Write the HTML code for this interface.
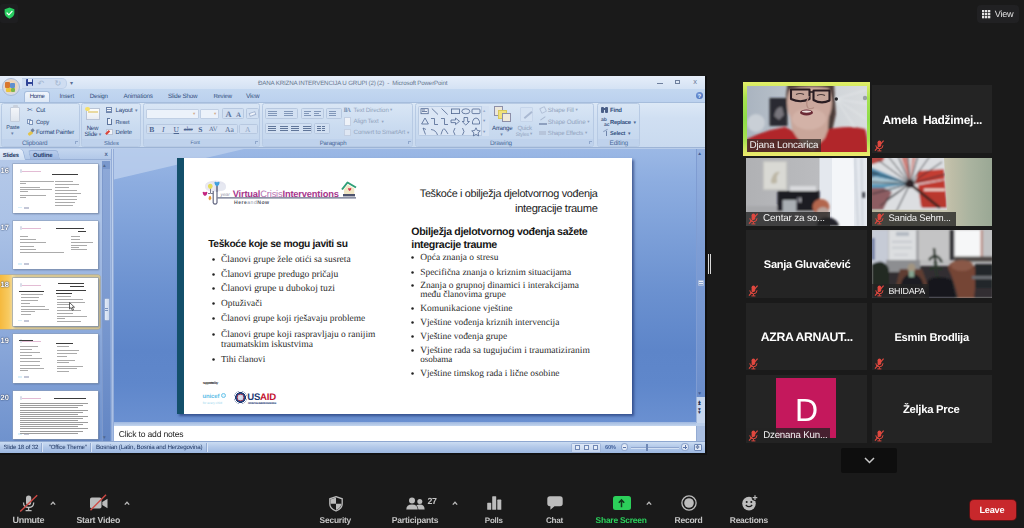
<!DOCTYPE html>
<html lang="bs">
<head>
<meta charset="utf-8">
<title>Zoom Meeting</title>
<style>
*{box-sizing:border-box;margin:0;padding:0}
html,body{width:1024px;height:528px;overflow:hidden;background:#1a1a1a}
body{position:relative;font-family:"Liberation Sans",sans-serif;color:#fff;text-rendering:geometricPrecision}
.a{position:absolute}
.t{position:absolute;white-space:pre;line-height:1}
svg{position:absolute;overflow:visible}
#ppt{position:absolute;left:0;top:76px;width:705px;height:377px;overflow:hidden;background:#bfd4ee}
#pin{position:absolute;left:-4px;top:-4px;width:713px;height:385px;padding:0;filter:blur(.45px)}
#pin>*{margin:4px 0 0 4px}
#edge{position:absolute;left:705px;top:76px;width:2px;height:377px;background:#101010}
#zm{position:absolute;left:0;top:0;width:1024px;height:528px;will-change:transform}
.tile{position:absolute;background:#242424;overflow:hidden}
</style>
</head>
<body>
<!-- ================= PowerPoint shared window ================= -->
<div id="ppt"><div id="pin">
<div class="a" style="left:0px;top:0px;width:705px;height:13px;background:linear-gradient(#e6eef9,#d4e2f4)"></div>
<div class="t" style="left:258px;top:5px;font-size:6.2px;color:#66768f;letter-spacing:-0.17px;">ĐANA KRIZNA INTERVENCIJA U GRUPI (2) (2)  -  Microsoft PowerPoint</div>
<div class="a" style="left:22px;top:2px;width:44.5px;height:10.5px;border-radius:0 5px 5px 0;background:#cfddf1;border:1px solid #bdcfe8;border-left:0"></div>
<div class="a" style="left:26px;top:3px;width:7px;height:7px;background:#2f4496;border-radius:1px"></div>
<div class="a" style="left:28px;top:3px;width:3.5px;height:3px;background:#e4ebfa"></div>
<div class="a" style="left:28px;top:7.5px;width:3.5px;height:2.5px;background:#c9d3ee"></div>
<div class="t" style="left:37.5px;top:4px;font-size:8px;color:#a3b4cf;font-family:'DejaVu Sans','Liberation Sans',sans-serif;">↶</div>
<div class="t" style="left:54.5px;top:4px;font-size:8px;color:#a3b4cf;font-family:'DejaVu Sans','Liberation Sans',sans-serif;">↻</div>
<div class="t" style="left:70px;top:5px;font-size:6px;color:#5a6f95;font-family:'DejaVu Sans','Liberation Sans',sans-serif;">▾</div>
<div class="a" style="left:657px;top:6.7px;width:5.5px;height:1.3px;background:#6e7f9d"></div>
<div class="a" style="left:675px;top:3.6px;width:5px;height:4.4px;border:1px solid #6e7f9d;border-top-width:1.6px"></div>
<div class="t" style="left:693.2px;top:2px;font-size:7.5px;color:#6e7f9d;">x</div>
<div class="a" style="left:0px;top:13px;width:705px;height:13px;background:linear-gradient(#c3d7f0,#bbd1ee)"></div>
<div class="a" style="left:24.2px;top:14.8px;width:26.2px;height:11.7px;background:linear-gradient(#f0f5fc,#dde8f6);border:1px solid #a6bddc;border-bottom:0;border-radius:3px 3px 0 0"></div>
<div class="t" style="left:29.7px;top:18px;font-size:6.08px;color:#27396a;letter-spacing:-0.31px;">Home</div>
<div class="t" style="left:59.4px;top:18px;font-size:6.27px;color:#34507f;letter-spacing:-0.17px;">Insert</div>
<div class="t" style="left:89.8px;top:18px;font-size:6.2px;color:#34507f;letter-spacing:-0.21px;">Design</div>
<div class="t" style="left:123.4px;top:18px;font-size:6.34px;color:#34507f;letter-spacing:-0.19px;">Animations</div>
<div class="t" style="left:168px;top:18px;font-size:6.27px;color:#34507f;letter-spacing:-0.2px;">Slide Show</div>
<div class="t" style="left:213.4px;top:18px;font-size:6.01px;color:#34507f;letter-spacing:-0.22px;">Review</div>
<div class="t" style="left:246px;top:18px;font-size:6.66px;color:#34507f;letter-spacing:-0.27px;">View</div>
<div class="a" style="left:695.7px;top:16.3px;width:7.1px;height:7.1px;border-radius:50%;background:radial-gradient(circle at 40% 35%,#7da0de,#3a62b0)"></div>
<div class="t" style="left:697.7px;top:19px;font-size:5.5px;color:#fff;font-weight:bold;">?</div>
<div class="a" style="left:0px;top:25.7px;width:705px;height:46.3px;background:linear-gradient(#dce8f6,#d0dff2 35%,#c9daef);border-top:1px solid #a6bddc;border-bottom:1px solid #9db4d6"></div>
<div class="a" style="left:1px;top:27.2px;width:78.5px;height:43.8px;border:1px solid #b7cae4;border-radius:2.5px;background:linear-gradient(#d9e6f5,#cadbf0 55%,#c4d6ed)"></div>
<div class="a" style="left:1.8px;top:62.8px;width:76.9px;height:7.5px;background:#bfd2ec;border-radius:0 0 2px 2px"></div>
<div class="t" style="left:21.9px;top:65px;font-size:6.39px;color:#4a6a9a;letter-spacing:-0.19px;">Clipboard</div>
<div class="a" style="left:81px;top:27.2px;width:60.3px;height:43.8px;border:1px solid #b7cae4;border-radius:2.5px;background:linear-gradient(#d9e6f5,#cadbf0 55%,#c4d6ed)"></div>
<div class="a" style="left:81.8px;top:62.8px;width:58.7px;height:7.5px;background:#bfd2ec;border-radius:0 0 2px 2px"></div>
<div class="t" style="left:104px;top:66px;font-size:5.74px;color:#4a6a9a;letter-spacing:-0.17px;">Slides</div>
<div class="a" style="left:143px;top:27.2px;width:117.3px;height:43.8px;border:1px solid #b7cae4;border-radius:2.5px;background:linear-gradient(#d9e6f5,#cadbf0 55%,#c4d6ed)"></div>
<div class="a" style="left:143.8px;top:62.8px;width:115.7px;height:7.5px;background:#bfd2ec;border-radius:0 0 2px 2px"></div>
<div class="t" style="left:190.6px;top:66px;font-size:4.87px;color:#4a6a9a;letter-spacing:-0.18px;">Font</div>
<div class="a" style="left:262px;top:27.2px;width:151px;height:43.8px;border:1px solid #b7cae4;border-radius:2.5px;background:linear-gradient(#d9e6f5,#cadbf0 55%,#c4d6ed)"></div>
<div class="a" style="left:262.8px;top:62.8px;width:149.4px;height:7.5px;background:#bfd2ec;border-radius:0 0 2px 2px"></div>
<div class="t" style="left:319.75px;top:65px;font-size:6.09px;color:#4a6a9a;letter-spacing:-0.19px;">Paragraph</div>
<div class="a" style="left:415px;top:27.2px;width:179.2px;height:43.8px;border:1px solid #b7cae4;border-radius:2.5px;background:linear-gradient(#d9e6f5,#cadbf0 55%,#c4d6ed)"></div>
<div class="a" style="left:415.8px;top:62.8px;width:177.6px;height:7.5px;background:#bfd2ec;border-radius:0 0 2px 2px"></div>
<div class="t" style="left:490px;top:65px;font-size:6.36px;color:#4a6a9a;letter-spacing:-0.22px;">Drawing</div>
<div class="a" style="left:596.8px;top:27.2px;width:42.9px;height:43.8px;border:1px solid #b7cae4;border-radius:2.5px;background:linear-gradient(#d9e6f5,#cadbf0 55%,#c4d6ed)"></div>
<div class="a" style="left:597.6px;top:62.8px;width:41.3px;height:7.5px;background:#bfd2ec;border-radius:0 0 2px 2px"></div>
<div class="t" style="left:609.5px;top:65px;font-size:6.5px;color:#4a6a9a;letter-spacing:-0.19px;">Editing</div>
<div class="a" style="left:74.5px;top:64.5px;width:3.5px;height:3.5px;border-left:1px solid #8fa7cc;border-top:1px solid #8fa7cc"></div>
<div class="a" style="left:254.5px;top:64.5px;width:3.5px;height:3.5px;border-left:1px solid #8fa7cc;border-top:1px solid #8fa7cc"></div>
<div class="a" style="left:407.5px;top:64.5px;width:3.5px;height:3.5px;border-left:1px solid #8fa7cc;border-top:1px solid #8fa7cc"></div>
<div class="a" style="left:588.5px;top:64.5px;width:3.5px;height:3.5px;border-left:1px solid #8fa7cc;border-top:1px solid #8fa7cc"></div>
<div class="a" style="left:10px;top:30.5px;width:10.3px;height:15.5px;background:linear-gradient(#f3f5f9,#dfe5ee);border:1px solid #c3cddd;border-radius:1px"></div>
<div class="a" style="left:12.5px;top:29px;width:5px;height:3px;background:#c9d0dc;border-radius:1px"></div>
<div class="t" style="left:6.25px;top:50px;font-size:5.49px;color:#2b4777;letter-spacing:-0.2px;">Paste</div>
<div class="t" style="left:11px;top:56px;font-size:5px;color:#6b83aa;font-family:'DejaVu Sans','Liberation Sans',sans-serif;">▾</div>
<div class="t" style="left:27px;top:31px;font-size:7px;color:#4a6593;font-family:'DejaVu Sans','Liberation Sans',sans-serif;">✂</div>
<div class="t" style="left:36px;top:32px;font-size:6.33px;color:#2b4777;letter-spacing:-0.28px;">Cut</div>
<div class="a" style="left:27px;top:42.5px;width:4px;height:5px;background:#eef2f8;border:1px solid #7f96bb"></div>
<div class="a" style="left:29px;top:44px;width:4px;height:5px;background:#eef2f8;border:1px solid #7f96bb"></div>
<div class="t" style="left:36px;top:44px;font-size:5.99px;color:#2b4777;letter-spacing:-0.26px;">Copy</div>
<div class="a" style="left:27.5px;top:55.5px;width:4.5px;height:3px;background:#e3c44a;transform:rotate(-35deg);border-radius:1px"></div>
<div class="a" style="left:31px;top:52.5px;width:2.5px;height:2.5px;background:#6d7f9e;transform:rotate(-35deg)"></div>
<div class="t" style="left:36px;top:54px;font-size:6.12px;color:#2b4777;letter-spacing:-0.17px;">Format Painter</div>
<div class="a" style="left:86px;top:32px;width:14px;height:11.7px;background:linear-gradient(#fdfdfb,#e9ecf2);border:1px solid #b9c4d6"></div>
<div class="a" style="left:88px;top:35px;width:10px;height:2px;background:#e9d9a0"></div>
<div class="a" style="left:85px;top:30.5px;width:4.5px;height:4px;background:#f5df6a;border-radius:50%"></div>
<div class="t" style="left:86.7px;top:50px;font-size:6.2px;color:#2b4777;letter-spacing:-0.35px;">New</div>
<div class="t" style="left:84.4px;top:56px;font-size:6.24px;color:#2b4777;letter-spacing:-0.19px;">Slide</div>
<div class="t" style="left:98.7px;top:57px;font-size:5px;color:#6b83aa;font-family:'DejaVu Sans','Liberation Sans',sans-serif;">▾</div>
<div class="a" style="left:106.3px;top:30.7px;width:6.2px;height:6.3px;border:1px solid #6f86ad;background:repeating-linear-gradient(#f2f5fa 0,#f2f5fa 1px,#7d92b5 1px,#7d92b5 2px)"></div>
<div class="t" style="left:115.6px;top:32px;font-size:6.07px;color:#2b4777;letter-spacing:-0.2px;">Layout</div>
<div class="t" style="left:135px;top:33px;font-size:5px;color:#6b83aa;font-family:'DejaVu Sans','Liberation Sans',sans-serif;">▾</div>
<div class="a" style="left:107px;top:42.5px;width:5px;height:6.5px;border:1px solid #5d749c;border-top:0;background:#eaf0f8"></div>
<div class="a" style="left:106.5px;top:41.5px;width:3.5px;height:1.5px;background:#5d749c"></div>
<div class="t" style="left:115.6px;top:45px;font-size:5.72px;color:#2b4777;letter-spacing:-0.21px;">Reset</div>
<div class="a" style="left:106.3px;top:52.7px;width:6.5px;height:6.6px;background:#f3f4f8;border:1px solid #b9c4d6"></div>
<div class="a" style="left:106px;top:54px;width:3.5px;height:4.5px;background:#d9453a;transform:rotate(45deg) scale(.55,1)"></div>
<div class="t" style="left:115.6px;top:54px;font-size:6.01px;color:#2b4777;letter-spacing:-0.19px;">Delete</div>
<div class="a" style="left:146px;top:33px;width:52.5px;height:9.8px;background:#ecf2fa;border:1px solid #c0cfe4;border-radius:1px"></div>
<div class="a" style="left:199.5px;top:33px;width:19.5px;height:9.8px;background:#ecf2fa;border:1px solid #c0cfe4;border-radius:1px"></div>
<div class="t" style="left:193px;top:37px;font-size:4.5px;color:#d0a98a;font-family:'DejaVu Sans','Liberation Sans',sans-serif;">▾</div>
<div class="t" style="left:214px;top:37px;font-size:4.5px;color:#d0a98a;font-family:'DejaVu Sans','Liberation Sans',sans-serif;">▾</div>
<div class="a" style="left:222px;top:32.3px;width:22px;height:11.2px;border:1px solid #b7c8e0;border-radius:1.5px;background:#d2e0f2"></div>
<div class="t" style="left:225.5px;top:34px;font-size:8.5px;color:#5f779f;font-family:'Liberation Serif',serif;font-weight:bold;">A</div>
<div class="t" style="left:236px;top:36px;font-size:7px;color:#5f779f;font-family:'Liberation Serif',serif;font-weight:bold;">A</div>
<div class="a" style="left:246.3px;top:32.3px;width:12.4px;height:11.2px;border:1px solid #b7c8e0;border-radius:1.5px;background:#d2e0f2"></div>
<div class="a" style="left:249px;top:36px;width:7px;height:4px;background:#eef3fa;border:1px solid #a3b5d2;transform:rotate(-20deg)"></div>
<div class="a" style="left:145.5px;top:48px;width:92.9px;height:10.4px;border:1px solid #b7c8e0;border-radius:1.5px;background:#d0def1"></div>
<div class="a" style="left:239.2px;top:48px;width:19.2px;height:10.4px;border:1px solid #b7c8e0;border-radius:1.5px;background:#d0def1"></div>
<div class="t" style="left:149.3px;top:50px;font-size:7.5px;color:#4d6590;font-family:'Liberation Serif',serif;font-weight:bold;">B</div>
<div class="t" style="left:162px;top:50px;font-size:7.5px;color:#4d6590;font-family:'Liberation Serif',serif;font-style:italic;">I</div>
<div class="t" style="left:173.6px;top:50px;font-size:7.5px;color:#4d6590;font-family:'Liberation Serif',serif;text-decoration:underline;">U</div>
<div class="t" style="left:183.8px;top:51px;font-size:6.5px;color:#4d6590;font-family:'Liberation Serif',serif;text-decoration:line-through;">abc</div>
<div class="t" style="left:198.3px;top:50px;font-size:7.5px;color:#4d6590;font-family:'Liberation Serif',serif;font-weight:bold;">S</div>
<div class="t" style="left:209px;top:51px;font-size:6.5px;color:#4d6590;font-family:'Liberation Serif',serif;">AV</div>
<div class="t" style="left:225px;top:50px;font-size:7.5px;color:#4d6590;font-family:'Liberation Serif',serif;">Aa</div>
<div class="t" style="left:245px;top:50px;font-size:7.5px;color:#8ea3c4;font-family:'Liberation Serif',serif;">A</div>
<div class="a" style="left:264.6px;top:32.2px;width:33.9px;height:11.2px;border:1px solid #b7c8e0;border-radius:1.5px;background:#d2e0f2"></div>
<div class="a" style="left:300.5px;top:32.2px;width:23px;height:11.2px;border:1px solid #b7c8e0;border-radius:1.5px;background:#d2e0f2"></div>
<div class="a" style="left:325.5px;top:32.2px;width:16.1px;height:11.2px;border:1px solid #b7c8e0;border-radius:1.5px;background:#d2e0f2"></div>
<div class="a" style="left:268px;top:35px;width:9px;height:1px;background:#8096b8"></div>
<div class="a" style="left:268px;top:37.2px;width:9px;height:1px;background:#8096b8"></div>
<div class="a" style="left:268px;top:39.4px;width:9px;height:1px;background:#8096b8"></div>
<div class="a" style="left:284px;top:35px;width:9px;height:1px;background:#8096b8"></div>
<div class="a" style="left:284px;top:37.2px;width:9px;height:1px;background:#8096b8"></div>
<div class="a" style="left:284px;top:39.4px;width:9px;height:1px;background:#8096b8"></div>
<div class="a" style="left:304px;top:35px;width:7px;height:1px;background:#8096b8"></div>
<div class="a" style="left:304px;top:37.2px;width:5px;height:1px;background:#8096b8"></div>
<div class="a" style="left:304px;top:39.4px;width:7px;height:1px;background:#8096b8"></div>
<div class="a" style="left:314px;top:35px;width:7px;height:1px;background:#8096b8"></div>
<div class="a" style="left:314px;top:37.2px;width:5px;height:1px;background:#8096b8"></div>
<div class="a" style="left:314px;top:39.4px;width:7px;height:1px;background:#8096b8"></div>
<div class="a" style="left:329px;top:35px;width:7px;height:1px;background:#8096b8"></div>
<div class="a" style="left:329px;top:37.2px;width:7px;height:1px;background:#8096b8"></div>
<div class="a" style="left:329px;top:39.4px;width:7px;height:1px;background:#8096b8"></div>
<div class="a" style="left:264.6px;top:47.3px;width:47.7px;height:11.1px;border:1px solid #b7c8e0;border-radius:1.5px;background:#d2e0f2"></div>
<div class="a" style="left:314px;top:47.3px;width:16.2px;height:11.1px;border:1px solid #b7c8e0;border-radius:1.5px;background:#d2e0f2"></div>
<div class="a" style="left:267.5px;top:50px;width:8px;height:1px;background:#5f7599"></div>
<div class="a" style="left:267.5px;top:52.2px;width:8px;height:1px;background:#5f7599"></div>
<div class="a" style="left:267.5px;top:54.4px;width:8px;height:1px;background:#5f7599"></div>
<div class="a" style="left:279.5px;top:50px;width:8px;height:1px;background:#5f7599"></div>
<div class="a" style="left:279.5px;top:52.2px;width:8px;height:1px;background:#5f7599"></div>
<div class="a" style="left:279.5px;top:54.4px;width:8px;height:1px;background:#5f7599"></div>
<div class="a" style="left:291px;top:50px;width:8px;height:1px;background:#5f7599"></div>
<div class="a" style="left:291px;top:52.2px;width:8px;height:1px;background:#5f7599"></div>
<div class="a" style="left:291px;top:54.4px;width:8px;height:1px;background:#5f7599"></div>
<div class="a" style="left:302.5px;top:50px;width:8px;height:1px;background:#5f7599"></div>
<div class="a" style="left:302.5px;top:52.2px;width:8px;height:1px;background:#5f7599"></div>
<div class="a" style="left:302.5px;top:54.4px;width:8px;height:1px;background:#5f7599"></div>
<div class="a" style="left:317px;top:50px;width:3.5px;height:1px;background:#5f7599"></div>
<div class="a" style="left:317px;top:52.2px;width:3.5px;height:1px;background:#5f7599"></div>
<div class="a" style="left:317px;top:54.4px;width:3.5px;height:1px;background:#5f7599"></div>
<div class="a" style="left:321.5px;top:50px;width:3.5px;height:1px;background:#5f7599"></div>
<div class="a" style="left:321.5px;top:52.2px;width:3.5px;height:1px;background:#5f7599"></div>
<div class="a" style="left:321.5px;top:54.4px;width:3.5px;height:1px;background:#5f7599"></div>
<div class="t" style="left:343.5px;top:32px;font-size:6.5px;color:#7f93b4;font-family:'Liberation Serif',serif;font-weight:bold;letter-spacing:-1.13px;">IIA</div>
<div class="t" style="left:353.6px;top:32px;font-size:6.16px;color:#93a5c0;letter-spacing:-0.16px;">Text Direction</div>
<div class="t" style="left:390px;top:33px;font-size:4.5px;color:#93a5c0;font-family:'DejaVu Sans','Liberation Sans',sans-serif;">▾</div>
<div class="a" style="left:344px;top:40.5px;width:7px;height:9px;background:#eef2f8;border:1px solid #c3cfe2"></div>
<div class="t" style="left:353.6px;top:43px;font-size:6.14px;color:#93a5c0;letter-spacing:-0.16px;">Align Text</div>
<div class="t" style="left:381.5px;top:45px;font-size:4.5px;color:#93a5c0;font-family:'DejaVu Sans','Liberation Sans',sans-serif;">▾</div>
<div class="a" style="left:344px;top:52.5px;width:7px;height:7.5px;background:#dfe7f3;border:1px solid #c3cfe2"></div>
<div class="t" style="left:353.6px;top:54px;font-size:6.19px;color:#93a5c0;letter-spacing:-0.17px;">Convert to SmartArt</div>
<div class="t" style="left:407px;top:56px;font-size:4.5px;color:#93a5c0;font-family:'DejaVu Sans','Liberation Sans',sans-serif;">▾</div>
<div class="a" style="left:418px;top:29.7px;width:70.5px;height:30.1px;background:#dbe6f5;border:1px solid #b9cbe3;border-radius:1.5px"></div>
<div class="a" style="left:481px;top:29.7px;width:7.5px;height:30.1px;background:#d3e0f2;border-left:1px solid #b9cbe3"></div>
<svg style="left:418.5px;top:29.5px" width="64" height="31" viewBox="0 0 64 31"><g fill="none" stroke="#4f6690" stroke-width=".8">
<rect x="2" y="2.7" width="7.2" height="5" fill="#e9eef7"/><path d="M3 4h3M3 5.5h5"/>
<path d="M12.8 2.5l6.2 6"/><path d="M22.5 2.5l6.2 6"/><rect x="32.5" y="3" width="8" height="4.6"/><ellipse cx="46.8" cy="5.3" rx="4" ry="2.5"/><rect x="53" y="3" width="8" height="4.6" rx="1"/>
<path d="M2.6 18l3.4-6 3.4 6z"/><path d="M12 12.5h3.5v6h3.5"/><path d="M22 12.5h3.5v6h3.5"/><path d="M32 14h4.5v-2l4 3.3-4 3.3v-2H32z"/><path d="M45 11.5h3.6v4h1.8l-3.6 3.6-3.6-3.6H45z"/><path d="M53.5 18v-2.5q1-3.5 3.5-3.5t3.5 3.5V18z"/>
<path d="M4 22l2.5 6.5M4 22l3 1.5"/><path d="M12 23.5q5 .5 6.5 5.5"/><path d="M22 28.5q2-7 3.5-5.500t3.500 5"/><path d="M36 22q-3 3.500 0 7"/><path d="M43.500 22q3 3.500 0 7"/><path d="M57 21.800l1.300 2.700 3 .4-2.200 2 .6 3-2.700-1.500-2.700 1.500.6-3-2.200-2 3-.4z"/>
</g></svg>
<div class="t" style="left:483px;top:34px;font-size:4.5px;color:#9bb0cf;font-family:'DejaVu Sans','Liberation Sans',sans-serif;">▴</div>
<div class="t" style="left:483px;top:44px;font-size:4.5px;color:#7f97bd;font-family:'DejaVu Sans','Liberation Sans',sans-serif;">▾</div>
<div class="t" style="left:483px;top:55px;font-size:4.5px;color:#7f97bd;font-family:'DejaVu Sans','Liberation Sans',sans-serif;">▾</div>
<div class="a" style="left:494.3px;top:30px;width:9.2px;height:9.5px;background:#ece7da;border:1px solid #8d8fa8"></div>
<div class="a" style="left:497.5px;top:33.5px;width:9.5px;height:9px;background:#f1e27a;border:1px solid #d8c85a"></div>
<div class="a" style="left:502px;top:37px;width:8.5px;height:8.8px;background:#efe9db;border:1px solid #8d8fa8"></div>
<div class="t" style="left:492px;top:50px;font-size:6.17px;color:#2b4777;letter-spacing:-0.2px;">Arrange</div>
<div class="t" style="left:500.3px;top:57px;font-size:5px;color:#6b83aa;font-family:'DejaVu Sans','Liberation Sans',sans-serif;">▾</div>
<div class="a" style="left:519.7px;top:30.5px;width:13.3px;height:15.5px;background:#d5e2f3;border:1px solid #c6d5ea;border-radius:1px"></div>
<div class="a" style="left:523px;top:37.5px;width:10px;height:1.5px;background:#aab9d2;transform:rotate(-40deg)"></div>
<div class="t" style="left:517.4px;top:50px;font-size:6.14px;color:#93a5c0;letter-spacing:-0.22px;">Quick</div>
<div class="t" style="left:515.8px;top:57px;font-size:5.14px;color:#93a5c0;letter-spacing:-0.15px;">Styles</div>
<div class="t" style="left:530px;top:57px;font-size:4.5px;color:#93a5c0;font-family:'DejaVu Sans','Liberation Sans',sans-serif;">▾</div>
<div class="a" style="left:539.5px;top:31px;width:6px;height:5.5px;border:1px solid #b3c1d8;transform:rotate(-25deg);border-radius:1px"></div>
<div class="t" style="left:547.8px;top:32px;font-size:6.22px;color:#93a5c0;letter-spacing:-0.17px;">Shape Fill</div>
<div class="t" style="left:575.5px;top:33px;font-size:4.5px;color:#93a5c0;font-family:'DejaVu Sans','Liberation Sans',sans-serif;">▾</div>
<div class="a" style="left:538.5px;top:47.3px;width:8px;height:1.7px;background:#8ea0bf"></div>
<div class="a" style="left:540px;top:42px;width:5.5px;height:1.2px;background:#a9b8d0;transform:rotate(-35deg)"></div>
<div class="t" style="left:547.8px;top:44px;font-size:6.32px;color:#93a5c0;letter-spacing:-0.18px;">Shape Outline</div>
<div class="t" style="left:587.2px;top:45px;font-size:4.5px;color:#93a5c0;font-family:'DejaVu Sans','Liberation Sans',sans-serif;">▾</div>
<div class="a" style="left:539px;top:55px;width:6.5px;height:3.5px;background:#b7c5db"></div>
<div class="t" style="left:547.8px;top:55px;font-size:6.05px;color:#93a5c0;letter-spacing:-0.17px;">Shape Effects</div>
<div class="t" style="left:585px;top:56px;font-size:4.5px;color:#93a5c0;font-family:'DejaVu Sans','Liberation Sans',sans-serif;">▾</div>
<div class="a" style="left:601px;top:30.5px;width:2.8px;height:6.5px;background:#4a5f88;border-radius:1px"></div>
<div class="a" style="left:605px;top:30.5px;width:2.8px;height:6.5px;background:#4a5f88;border-radius:1px"></div>
<div class="a" style="left:603px;top:32px;width:3px;height:2px;background:#4a5f88"></div>
<div class="t" style="left:610px;top:32px;font-size:6.03px;color:#33507e;font-weight:bold;letter-spacing:-0.23px;">Find</div>
<div class="t" style="left:601px;top:42px;font-size:5px;color:#4a5f88;font-weight:bold;">ab</div>
<div class="t" style="left:604px;top:47px;font-size:5px;color:#4a5f88;font-weight:bold;">ac</div>
<div class="t" style="left:610px;top:45px;font-size:5.8px;color:#33507e;font-weight:bold;letter-spacing:-0.21px;">Replace</div>
<div class="t" style="left:633.5px;top:45px;font-size:5px;color:#4a638f;font-family:'DejaVu Sans','Liberation Sans',sans-serif;">▾</div>
<div class="a" style="left:603px;top:54px;width:5px;height:1.3px;background:#8fa3c3;transform:rotate(-30deg)"></div>
<div class="a" style="left:606px;top:55px;width:1.3px;height:5px;background:#6e84aa"></div>
<div class="t" style="left:610px;top:56px;font-size:5.54px;color:#33507e;font-weight:bold;letter-spacing:-0.18px;">Select</div>
<div class="t" style="left:628px;top:56px;font-size:5px;color:#4a638f;font-family:'DejaVu Sans','Liberation Sans',sans-serif;">▾</div>
<div class="a" style="left:1.5px;top:1.5px;width:18px;height:18px;border-radius:50%;background:radial-gradient(circle at 50% 45%,#fbeee0 0,#efd3b4 40%,#d3dbea 72%,#a3b7d6 100%);border:1px solid #a9bad6"></div>
<div class="a" style="left:5px;top:6px;width:5px;height:5.5px;background:#d8762e;border-radius:1px"></div>
<div class="a" style="left:10px;top:7px;width:5px;height:4.5px;background:#5f8fcf;border-radius:1px"></div>
<div class="a" style="left:6px;top:11.5px;width:4.5px;height:4.5px;background:#e9c53c;border-radius:1px"></div>
<div class="a" style="left:10.5px;top:11.5px;width:4.5px;height:4.5px;background:#7eb64a;border-radius:1px"></div>
<div class="a" style="left:0px;top:72px;width:705px;height:293.5px;background:#b9cdea"></div>
<div class="a" style="left:0px;top:72.5px;width:110.5px;height:293px;background:linear-gradient(180deg,#b6cae9 0,#abc2e6 25%,#98b3df 50%,#82a1d6 75%,#6f92cd 100%)"></div>
<div class="a" style="left:0px;top:72.5px;width:110.5px;height:11px;background:linear-gradient(#c4d6ef,#b2c8e8);border-bottom:1px solid #98b0d6"></div>
<div class="a" style="left:0px;top:73.3px;width:26px;height:10.7px;background:linear-gradient(#e6eefa,#cfdef2);border-radius:0 4px 0 0;border-right:1px solid #9db5db;transform:skewX(14deg);transform-origin:0 100%"></div>
<div class="a" style="left:28.5px;top:74.3px;width:30px;height:9.2px;background:linear-gradient(#b9cdec,#9fb9e2);border-radius:3px 3px 0 0;border:1px solid #9db5db;border-bottom:0;transform:skewX(14deg)"></div>
<div class="t" style="left:2.75px;top:78px;font-size:5.85px;color:#1d3560;font-weight:bold;letter-spacing:-0.19px;">Slides</div>
<div class="t" style="left:33px;top:77px;font-size:6.0px;color:#27406c;font-weight:bold;letter-spacing:-0.2px;">Outline</div>
<div class="t" style="left:104.6px;top:76px;font-size:6px;color:#4c6490;font-weight:bold;">x</div>
<div class="a" style="left:101.5px;top:84.5px;width:8.8px;height:281px;background:linear-gradient(180deg,#8ea9d8,#7b9ad0 50%,#6386c4);border-left:1px solid #7d99cc"></div>
<div class="a" style="left:101.5px;top:84.5px;width:8.8px;height:8px;background:#7a98cc"></div>
<div class="t" style="left:103px;top:88px;font-size:5.5px;color:#50688f;font-family:'DejaVu Sans','Liberation Sans',sans-serif;">▴</div>
<div class="t" style="left:103px;top:360px;font-size:5.5px;color:#50688f;font-family:'DejaVu Sans','Liberation Sans',sans-serif;">▾</div>
<div class="a" style="left:103.5px;top:222px;width:6.5px;height:23px;background:linear-gradient(90deg,#e3ebf7,#cbd9ef);border:1px solid #93aad2;border-radius:1.5px"></div>
<div class="a" style="left:105.3px;top:232px;width:3px;height:0.8px;background:#7d95c0"></div>
<div class="a" style="left:105.3px;top:234px;width:3px;height:0.8px;background:#7d95c0"></div>
<div class="a" style="left:110.5px;top:72.5px;width:3px;height:293px;background:linear-gradient(180deg,#c5d6ee,#a6bde4);border-left:1px solid #93acd8;border-right:1px solid #93acd8"></div>
<div class="a" style="left:12.8px;top:88px;width:85.2px;height:49.3px;background:#fff;box-shadow:0 0 0 .6px #8c9db9,1px 1px 1.5px rgba(40,60,100,.5)"></div>
<div class="t" style="left:0.5px;top:91px;font-size:7.5px;color:#fff;font-weight:bold;text-shadow:0 0 1px #24365a,0 0 1.5px #24365a;">16</div>
<div class="a" style="left:21px;top:94.8px;width:20px;height:0.8px;background:#e3bcd4"></div>
<div class="a" style="left:19.5px;top:93px;width:2.5px;height:4px;background:#d9dce8;border-radius:1px"></div>
<div class="a" style="left:18px;top:130.8px;width:3.5px;height:1.5px;background:#d9eef8"></div>
<div class="a" style="left:23.5px;top:130.5px;width:5.5px;height:2.2px;background:#c3c6d6"></div>
<div class="a" style="left:52px;top:98px;width:26px;height:0.9px;background:#3c3c3c"></div>
<div class="a" style="left:20px;top:105px;width:34px;height:0.9px;background:#ababab"></div>
<div class="a" style="left:20px;top:107px;width:6px;height:0.9px;background:#ababab"></div>
<div class="a" style="left:20px;top:111px;width:20px;height:0.9px;background:#ababab"></div>
<div class="a" style="left:20px;top:113px;width:32px;height:0.9px;background:#ababab"></div>
<div class="a" style="left:20px;top:115px;width:8px;height:0.9px;background:#ababab"></div>
<div class="a" style="left:20px;top:119px;width:26px;height:0.9px;background:#ababab"></div>
<div class="a" style="left:20px;top:121px;width:6px;height:0.9px;background:#ababab"></div>
<div class="a" style="left:55px;top:105px;width:18px;height:0.9px;background:#ababab"></div>
<div class="a" style="left:55px;top:108px;width:24px;height:0.9px;background:#ababab"></div>
<div class="a" style="left:55px;top:111px;width:14px;height:0.9px;background:#ababab"></div>
<div class="a" style="left:55px;top:114px;width:22px;height:0.9px;background:#ababab"></div>
<div class="a" style="left:55px;top:117px;width:26px;height:0.9px;background:#ababab"></div>
<div class="a" style="left:55px;top:120px;width:22px;height:0.9px;background:#ababab"></div>
<div class="a" style="left:55px;top:123px;width:22px;height:0.9px;background:#ababab"></div>
<div class="a" style="left:55px;top:126px;width:20px;height:0.9px;background:#ababab"></div>
<div class="a" style="left:55px;top:129px;width:18px;height:0.9px;background:#ababab"></div>
<div class="a" style="left:12.8px;top:144.8px;width:85.2px;height:48.7px;background:#fff;box-shadow:0 0 0 .6px #8c9db9,1px 1px 1.5px rgba(40,60,100,.5)"></div>
<div class="t" style="left:0.5px;top:148px;font-size:7.5px;color:#fff;font-weight:bold;text-shadow:0 0 1px #24365a,0 0 1.5px #24365a;">17</div>
<div class="a" style="left:21px;top:151.6px;width:20px;height:0.8px;background:#e3bcd4"></div>
<div class="a" style="left:19.5px;top:149.8px;width:2.5px;height:4px;background:#d9dce8;border-radius:1px"></div>
<div class="a" style="left:18px;top:187px;width:3.5px;height:1.5px;background:#d9eef8"></div>
<div class="a" style="left:23.5px;top:186.7px;width:5.5px;height:2.2px;background:#c3c6d6"></div>
<div class="a" style="left:56px;top:151.8px;width:28px;height:0.9px;background:#3c3c3c"></div>
<div class="a" style="left:78px;top:154.8px;width:8px;height:0.9px;background:#3c3c3c"></div>
<div class="a" style="left:20px;top:159.8px;width:8px;height:0.9px;background:#ababab"></div>
<div class="a" style="left:20px;top:162.8px;width:16px;height:0.9px;background:#ababab"></div>
<div class="a" style="left:20px;top:165.8px;width:26px;height:0.9px;background:#ababab"></div>
<div class="a" style="left:20px;top:169.8px;width:14px;height:0.9px;background:#ababab"></div>
<div class="a" style="left:20px;top:172.8px;width:16px;height:0.9px;background:#ababab"></div>
<div class="a" style="left:20px;top:175.8px;width:44px;height:0.9px;background:#ababab"></div>
<div class="a" style="left:71px;top:159.8px;width:9px;height:0.9px;background:#ababab"></div>
<div class="a" style="left:71px;top:162.8px;width:9px;height:0.9px;background:#ababab"></div>
<div class="a" style="left:71px;top:165.8px;width:22px;height:0.9px;background:#ababab"></div>
<div class="a" style="left:71px;top:168.8px;width:16px;height:0.9px;background:#ababab"></div>
<div class="a" style="left:71px;top:170.8px;width:8px;height:0.9px;background:#ababab"></div>
<div class="a" style="left:71px;top:172.8px;width:16px;height:0.9px;background:#ababab"></div>
<div class="a" style="left:0px;top:199.2px;width:99.7px;height:53.9px;background:linear-gradient(90deg,#f5b93e 0,#f8cb62 9%,#eed89c 12.5%,#d9c997 16%,#d2c392 100%);border-radius:0 2px 2px 0;box-shadow:0 0 0 .5px #b9a878"></div>
<div class="a" style="left:12.8px;top:202.2px;width:85.2px;height:48.1px;background:#fff;box-shadow:0 0 0 .6px #8c9db9,1px 1px 1.5px rgba(40,60,100,.5)"></div>
<div class="t" style="left:0.5px;top:205px;font-size:7.5px;color:#fff;font-weight:bold;text-shadow:0 0 1px #24365a,0 0 1.5px #24365a;">18</div>
<div class="a" style="left:21px;top:209px;width:20px;height:0.8px;background:#e3bcd4"></div>
<div class="a" style="left:19.5px;top:207.2px;width:2.5px;height:4px;background:#d9dce8;border-radius:1px"></div>
<div class="a" style="left:18px;top:243.8px;width:3.5px;height:1.5px;background:#d9eef8"></div>
<div class="a" style="left:23.5px;top:243.5px;width:5.5px;height:2.2px;background:#c3c6d6"></div>
<div class="a" style="left:58px;top:207.2px;width:26px;height:0.9px;background:#3c3c3c"></div>
<div class="a" style="left:70px;top:210.2px;width:14px;height:0.9px;background:#3c3c3c"></div>
<div class="a" style="left:19px;top:215.2px;width:25px;height:0.9px;background:#3c3c3c"></div>
<div class="a" style="left:21px;top:218.2px;width:22px;height:0.9px;background:#ababab"></div>
<div class="a" style="left:21px;top:221.2px;width:18px;height:0.9px;background:#ababab"></div>
<div class="a" style="left:21px;top:224.2px;width:17px;height:0.9px;background:#ababab"></div>
<div class="a" style="left:21px;top:227.2px;width:9px;height:0.9px;background:#ababab"></div>
<div class="a" style="left:21px;top:230.2px;width:24px;height:0.9px;background:#ababab"></div>
<div class="a" style="left:21px;top:233.2px;width:28px;height:0.9px;background:#ababab"></div>
<div class="a" style="left:21px;top:235.2px;width:14px;height:0.9px;background:#ababab"></div>
<div class="a" style="left:21px;top:238.2px;width:10px;height:0.9px;background:#ababab"></div>
<div class="a" style="left:56px;top:214.2px;width:30px;height:0.9px;background:#3c3c3c"></div>
<div class="a" style="left:56px;top:217.2px;width:16px;height:0.9px;background:#3c3c3c"></div>
<div class="a" style="left:57px;top:220.2px;width:14px;height:0.9px;background:#ababab"></div>
<div class="a" style="left:57px;top:223.2px;width:26px;height:0.9px;background:#ababab"></div>
<div class="a" style="left:57px;top:226.2px;width:28px;height:0.9px;background:#ababab"></div>
<div class="a" style="left:57px;top:228.2px;width:14px;height:0.9px;background:#ababab"></div>
<div class="a" style="left:57px;top:231.2px;width:16px;height:0.9px;background:#ababab"></div>
<div class="a" style="left:57px;top:234.2px;width:24px;height:0.9px;background:#ababab"></div>
<div class="a" style="left:57px;top:237.2px;width:16px;height:0.9px;background:#ababab"></div>
<div class="a" style="left:57px;top:240.2px;width:30px;height:0.9px;background:#ababab"></div>
<div class="a" style="left:57px;top:242.2px;width:8px;height:0.9px;background:#ababab"></div>
<div class="a" style="left:57px;top:245.2px;width:24px;height:0.9px;background:#ababab"></div>
<div class="a" style="left:12.8px;top:258px;width:85.2px;height:48.6px;background:#fff;box-shadow:0 0 0 .6px #8c9db9,1px 1px 1.5px rgba(40,60,100,.5)"></div>
<div class="t" style="left:0.5px;top:261px;font-size:7.5px;color:#fff;font-weight:bold;text-shadow:0 0 1px #24365a,0 0 1.5px #24365a;">19</div>
<div class="a" style="left:21px;top:264.8px;width:20px;height:0.8px;background:#e3bcd4"></div>
<div class="a" style="left:19.5px;top:263px;width:2.5px;height:4px;background:#d9dce8;border-radius:1px"></div>
<div class="a" style="left:18px;top:300.1px;width:3.5px;height:1.5px;background:#d9eef8"></div>
<div class="a" style="left:23.5px;top:299.8px;width:5.5px;height:2.2px;background:#c3c6d6"></div>
<div class="a" style="left:19px;top:264px;width:14px;height:0.9px;background:#3c3c3c"></div>
<div class="a" style="left:20px;top:270px;width:18px;height:0.9px;background:#ababab"></div>
<div class="a" style="left:20px;top:273px;width:12px;height:0.9px;background:#ababab"></div>
<div class="a" style="left:20px;top:276px;width:20px;height:0.9px;background:#ababab"></div>
<div class="a" style="left:20px;top:279px;width:12px;height:0.9px;background:#ababab"></div>
<div class="a" style="left:20px;top:282px;width:22px;height:0.9px;background:#ababab"></div>
<div class="a" style="left:20px;top:285px;width:20px;height:0.9px;background:#ababab"></div>
<div class="a" style="left:20px;top:289px;width:20px;height:0.9px;background:#ababab"></div>
<div class="a" style="left:20px;top:292px;width:24px;height:0.9px;background:#ababab"></div>
<div class="a" style="left:20px;top:294px;width:8px;height:0.9px;background:#ababab"></div>
<div class="a" style="left:56px;top:267px;width:17px;height:0.9px;background:#3c3c3c"></div>
<div class="a" style="left:57px;top:270px;width:12px;height:0.9px;background:#ababab"></div>
<div class="a" style="left:57px;top:274px;width:22px;height:0.9px;background:#ababab"></div>
<div class="a" style="left:57px;top:277px;width:20px;height:0.9px;background:#ababab"></div>
<div class="a" style="left:57px;top:280px;width:10px;height:0.9px;background:#ababab"></div>
<div class="a" style="left:57px;top:284px;width:18px;height:0.9px;background:#ababab"></div>
<div class="a" style="left:57px;top:286px;width:12px;height:0.9px;background:#ababab"></div>
<div class="a" style="left:57px;top:290px;width:26px;height:0.9px;background:#ababab"></div>
<div class="a" style="left:57px;top:292px;width:20px;height:0.9px;background:#ababab"></div>
<div class="a" style="left:57px;top:295px;width:12px;height:0.9px;background:#ababab"></div>
<div class="a" style="left:12.8px;top:314.7px;width:85.2px;height:48.8px;background:#fff;box-shadow:0 0 0 .6px #8c9db9,1px 1px 1.5px rgba(40,60,100,.5)"></div>
<div class="t" style="left:0.5px;top:318px;font-size:7.5px;color:#fff;font-weight:bold;text-shadow:0 0 1px #24365a,0 0 1.5px #24365a;">20</div>
<div class="a" style="left:21px;top:321.5px;width:20px;height:0.8px;background:#e3bcd4"></div>
<div class="a" style="left:19.5px;top:319.7px;width:2.5px;height:4px;background:#d9dce8;border-radius:1px"></div>
<div class="a" style="left:18px;top:357px;width:3.5px;height:1.5px;background:#d9eef8"></div>
<div class="a" style="left:23.5px;top:356.7px;width:5.5px;height:2.2px;background:#c3c6d6"></div>
<div class="a" style="left:54px;top:321.7px;width:32px;height:0.9px;background:#3c3c3c"></div>
<div class="a" style="left:20px;top:327.2px;width:68px;height:0.9px;background:#9c9c9c"></div>
<div class="a" style="left:20px;top:329.3px;width:63px;height:0.9px;background:#9c9c9c"></div>
<div class="a" style="left:20px;top:331.4px;width:58px;height:0.9px;background:#9c9c9c"></div>
<div class="a" style="left:20px;top:333.5px;width:68px;height:0.9px;background:#9c9c9c"></div>
<div class="a" style="left:20px;top:335.6px;width:63px;height:0.9px;background:#9c9c9c"></div>
<div class="a" style="left:20px;top:337.7px;width:58px;height:0.9px;background:#9c9c9c"></div>
<div class="a" style="left:20px;top:339.8px;width:68px;height:0.9px;background:#9c9c9c"></div>
<div class="a" style="left:20px;top:341.9px;width:63px;height:0.9px;background:#9c9c9c"></div>
<div class="a" style="left:20px;top:344px;width:58px;height:0.9px;background:#9c9c9c"></div>
<div class="a" style="left:20px;top:346.1px;width:68px;height:0.9px;background:#9c9c9c"></div>
<div class="a" style="left:20px;top:348.2px;width:63px;height:0.9px;background:#9c9c9c"></div>
<div class="a" style="left:20px;top:350.3px;width:58px;height:0.9px;background:#9c9c9c"></div>
<div class="a" style="left:20px;top:352.4px;width:68px;height:0.9px;background:#9c9c9c"></div>
<div class="a" style="left:20px;top:354.5px;width:63px;height:0.9px;background:#9c9c9c"></div>
<div class="a" style="left:20px;top:356.6px;width:58px;height:0.9px;background:#9c9c9c"></div>
<svg style="left:68.500px;top:225.5px" width="7" height="9" viewBox="0 0 7 9"><path d="M.5.5v6.500l1.600-1.400 1.200 2.800 1.200-.5-1.200-2.700h2.200z" fill="#fff" stroke="#222" stroke-width=".7"/></svg>
<div class="a" style="left:113.5px;top:72.5px;width:582.9px;height:273.5px;background:linear-gradient(180deg,#9bb8e5 0,#8dade0 12%,#7c9fd8 32%,#6b91d0 52%,#5d85c9 74%,#5f87cb 86%,#6a90d1 100%)"></div>
<svg style="left:113.5px;top:72.5px" width="130" height="31" viewBox="0 0 130 31"><path d="M0 0h130L0 30.500z" fill="#bfd2ee" opacity=".75"/></svg>
<div class="a" style="left:696.2px;top:72.5px;width:8.8px;height:248px;background:linear-gradient(#96b2e0,#7d9dd5 40%,#6a8dcb);border-left:1px solid #7f9cd2"></div>
<div class="t" style="left:698.2px;top:76px;font-size:5.5px;color:#3f5a94;font-family:'DejaVu Sans','Liberation Sans',sans-serif;">▴</div>
<div class="a" style="left:697.6px;top:203.8px;width:6.8px;height:6.6px;background:#e6edf8;border:1px solid #a9bbdb;border-radius:1px"></div>
<div class="a" style="left:699.3px;top:206.3px;width:3.4px;height:0.7px;background:#8ea5cf"></div>
<div class="a" style="left:699.3px;top:207.9px;width:3.4px;height:0.7px;background:#8ea5cf"></div>
<div class="a" style="left:696.2px;top:320.5px;width:8.8px;height:26px;background:#c6d6ee;border-left:1px solid #9db4da"></div>
<div class="t" style="left:698.2px;top:316px;font-size:5.5px;color:#3f5a94;font-family:'DejaVu Sans','Liberation Sans',sans-serif;">▾</div>
<div class="t" style="left:698px;top:324px;font-size:5.5px;color:#1f3158;font-family:'DejaVu Sans','Liberation Sans',sans-serif;">▴</div>
<div class="t" style="left:698px;top:326px;font-size:5.5px;color:#1f3158;font-family:'DejaVu Sans','Liberation Sans',sans-serif;">▴</div>
<div class="t" style="left:698px;top:332px;font-size:5.5px;color:#1f3158;font-family:'DejaVu Sans','Liberation Sans',sans-serif;">▾</div>
<div class="t" style="left:698px;top:335px;font-size:5.5px;color:#1f3158;font-family:'DejaVu Sans','Liberation Sans',sans-serif;">▾</div>
<div class="a" style="left:113.5px;top:346px;width:582.9px;height:4px;background:linear-gradient(#9fb8e0,#c3d5ee)"></div>
<div class="a" style="left:113.5px;top:350px;width:582.9px;height:15.3px;background:#fff"></div>
<div class="a" style="left:696.4px;top:350px;width:8.6px;height:15.3px;background:#a9bee1;border-left:1px solid #93abd3"></div>
<div class="t" style="left:118.7px;top:354px;font-size:8.59px;color:#1e1e1e;letter-spacing:-0.19px;">Click to add notes</div>
<div class="a" style="left:0px;top:365.3px;width:705px;height:11.7px;background:linear-gradient(#cbdcf2,#b3c9e9 45%,#9db8e1);border-top:1px solid #8ea7d0"></div>
<div class="t" style="left:3.5px;top:369px;font-size:6.05px;color:#1f3763;letter-spacing:-0.16px;">Slide 18 of 32</div>
<div class="t" style="left:48.8px;top:369px;font-size:6.07px;color:#1f3763;letter-spacing:-0.18px;">&quot;Office Theme&quot;</div>
<div class="t" style="left:96px;top:369px;font-size:6.22px;color:#1f3763;letter-spacing:-0.17px;">Bosnian (Latin, Bosnia and Herzegovina)</div>
<div class="a" style="left:41.2px;top:367px;width:1px;height:9px;background:#93abd2;box-shadow:1px 0 0 #d9e5f6"></div>
<div class="a" style="left:90px;top:367px;width:1px;height:9px;background:#93abd2;box-shadow:1px 0 0 #d9e5f6"></div>
<div class="a" style="left:205.5px;top:367px;width:1px;height:9px;background:#93abd2;box-shadow:1px 0 0 #d9e5f6"></div>
<div class="a" style="left:571.4px;top:366.5px;width:29.2px;height:10px;background:linear-gradient(#dfe9f7,#c3d4ee);border:1px solid #9fb5d9;border-radius:1.5px"></div>
<div class="a" style="left:575px;top:369px;width:5px;height:5px;border:1px solid #7088b5;background:#e6edf8"></div>
<div class="a" style="left:584px;top:369px;width:5px;height:5px;border:1px solid #7088b5;background:#e6edf8"></div>
<div class="a" style="left:593px;top:369px;width:5px;height:5px;border:1px solid #7088b5;background:#e6edf8"></div>
<div class="t" style="left:605px;top:370px;font-size:5.83px;color:#46659e;font-weight:bold;letter-spacing:-0.34px;">60%</div>
<div class="a" style="left:621px;top:367.3px;width:7.3px;height:7.4px;border-radius:50%;background:radial-gradient(#f4f7fc,#cbd9ee);border:1px solid #93a9cf"></div>
<div class="a" style="left:623px;top:370.6px;width:3.3px;height:0.9px;background:#5a74a8"></div>
<div class="a" style="left:631px;top:370.6px;width:48px;height:1px;background:#8fa6cf;box-shadow:0 1px 0 #d3e0f3"></div>
<div class="a" style="left:646.3px;top:367.5px;width:2px;height:7.5px;background:#eaf0fa;border:1px solid #6f88b5"></div>
<div class="a" style="left:681.4px;top:367.3px;width:7.2px;height:7.4px;border-radius:50%;background:radial-gradient(#f4f7fc,#cbd9ee);border:1px solid #93a9cf"></div>
<div class="a" style="left:683.3px;top:370.6px;width:3.4px;height:0.9px;background:#5a74a8"></div>
<div class="a" style="left:684.55px;top:369.3px;width:0.9px;height:3.5px;background:#5a74a8"></div>
<div class="a" style="left:694px;top:367.5px;width:7.5px;height:7.5px;border:1px solid #6f88b5;background:#e3ebf7;border-radius:1px"></div>
<div class="t" style="left:695.3px;top:370px;font-size:5.5px;color:#52699a;font-family:'DejaVu Sans','Liberation Sans',sans-serif;">✥</div>
<div class="a" style="left:177.3px;top:82px;width:455px;height:256.3px;background:#fff;box-shadow:1.5px 1.5px 2.5px rgba(20,40,100,.6)"></div>
<div class="a" style="left:177.3px;top:82px;width:6.4px;height:256.3px;background:#14506b"></div>
<svg style="left:196px;top:96px" width="168" height="40" viewBox="0 0 168 40"><g>
<ellipse cx="19.500" cy="14" rx="10.500" ry="5.500" fill="#e4e5ef"/><ellipse cx="14" cy="15" rx="5" ry="4" fill="#ebe9f2"/><ellipse cx="25" cy="15.500" rx="5" ry="3.500" fill="#e6e8f1"/>
<path d="M14.500 21v-6.500M21 20V12.500M14.500 21.500H12M17.200 21.500h-2.700" stroke="#7a7d92" stroke-width="1" fill="none"/>
<path d="M17.200 31V19M21 31V14M17.200 31q1.900 2.200 3.800 0" stroke="#666a84" stroke-width="1.200" fill="none"/>
<ellipse cx="14.300" cy="14.300" rx="2.300" ry="2.600" fill="#e4dc5a"/>
<path d="M18.300 10.600q1.400-1.900 2.700 0 1.300-1.900 2.700 0-.2 2.400-2.700 4-2.500-1.600-2.700-4z" fill="#3f9fdd"/>
<path d="M6.500 20.600q1.300-1.700 2.500 0 1.200-1.700 2.500 0-.3 2.300-2.500 3.400-2.200-1.100-2.500-3.400z" fill="#c3267f"/>
<path d="M13 24.500l1.500-.8 1 2.500-1.500 2.300-1.500-1.500z" fill="#e59a3e"/>
<path d="M21.300 25.900H160" stroke="#666c86" stroke-width="1.200"/>
<path d="M146 17.500l5.500-7 8.500 5" stroke="#2f9f78" stroke-width="2" fill="none" stroke-linejoin="round"/>
<path d="M148 17.300l3.800-4.600 6.500 3.800v6h-10.300z" fill="#f1e6c4"/>
<path d="M152 16.600q.9-1.100 1.700 0 .8-1.100 1.700 0-.2 1.600-1.700 2.400-1.500-.8-1.700-2.400z" fill="#d9304f"/>
<rect x="147" y="22" width="12" height="2.400" fill="#4e546e"/>
</g></svg>
<div class="t" style="left:220.6px;top:118px;font-size:4.82px;color:#8a8e9e;letter-spacing:-0.06px;font-style:italic;">year</div>
<div class="t" style="left:232.7px;top:114px;font-size:9.3px;color:#a6348c;font-weight:bold;letter-spacing:-0.17px;">Virtual<span style="font-weight:normal;color:#b56eb0">Crisis</span>Interventions</div>
<div class="t" style="left:234px;top:125px;font-size:5.13px;color:#4f5262;font-weight:bold;letter-spacing:0.47px;">Here<span style="font-weight:normal;color:#8c8fa0">and</span>Now</div>
<div class="t" style="left:419.8px;top:113px;font-size:10.85px;color:#1b1b1b;letter-spacing:-0.32px;">Teškoće i obilježja djelotvornog vođenja</div>
<div class="t" style="left:515px;top:128px;font-size:11.16px;color:#1b1b1b;letter-spacing:-0.34px;">integracije traume</div>
<div class="t" style="left:208.2px;top:164px;font-size:10.25px;color:#161616;font-weight:bold;letter-spacing:-0.34px;">Teškoće koje se mogu javiti su</div>
<div class="t" style="left:221px;top:180px;font-size:9.47px;color:#2a2a2a;font-family:'Liberation Serif',serif;">Članovi grupe žele otići sa susreta</div>
<svg style="left:212.1px;top:182.4px" width="3" height="3" viewBox="0 0 3 3"><circle cx="1.500" cy="1.500" r="1.250" fill="#222"/></svg>
<div class="t" style="left:221px;top:194px;font-size:9.59px;color:#2a2a2a;font-family:'Liberation Serif',serif;">Članovi grupe predugo pričaju</div>
<svg style="left:212.1px;top:196.9px" width="3" height="3" viewBox="0 0 3 3"><circle cx="1.500" cy="1.500" r="1.250" fill="#222"/></svg>
<div class="t" style="left:221px;top:208px;font-size:9.73px;color:#2a2a2a;font-family:'Liberation Serif',serif;">Članovi grupe u dubokoj tuzi</div>
<svg style="left:212.1px;top:211.3px" width="3" height="3" viewBox="0 0 3 3"><circle cx="1.500" cy="1.500" r="1.250" fill="#222"/></svg>
<div class="t" style="left:221px;top:224px;font-size:9.35px;color:#2a2a2a;font-family:'Liberation Serif',serif;">Optuživači</div>
<svg style="left:212.1px;top:225.9px" width="3" height="3" viewBox="0 0 3 3"><circle cx="1.500" cy="1.500" r="1.250" fill="#222"/></svg>
<div class="t" style="left:221px;top:239px;font-size:9.38px;color:#2a2a2a;font-family:'Liberation Serif',serif;">Članovi grupe koji rješavaju probleme</div>
<svg style="left:212.1px;top:241px" width="3" height="3" viewBox="0 0 3 3"><circle cx="1.500" cy="1.500" r="1.250" fill="#222"/></svg>
<div class="t" style="left:221px;top:255px;font-size:9.45px;color:#2a2a2a;font-family:'Liberation Serif',serif;">Članovi grupe koji raspravljaju o ranijim</div>
<svg style="left:212.1px;top:256.8px" width="3" height="3" viewBox="0 0 3 3"><circle cx="1.500" cy="1.500" r="1.250" fill="#222"/></svg>
<div class="t" style="left:221px;top:279px;font-size:9.18px;color:#2a2a2a;font-family:'Liberation Serif',serif;">Tihi članovi</div>
<svg style="left:212.1px;top:282.3px" width="3" height="3" viewBox="0 0 3 3"><circle cx="1.500" cy="1.500" r="1.250" fill="#222"/></svg>
<div class="t" style="left:221px;top:264px;font-size:9.6px;color:#2a2a2a;font-family:'Liberation Serif',serif;">traumatskim iskustvima</div>
<div class="t" style="left:202.7px;top:306px;font-size:3.6px;color:#444;font-weight:bold;letter-spacing:-0.65px;">supported by</div>
<div class="t" style="left:202.5px;top:319px;font-size:5.95px;color:#5fc0e8;font-weight:bold;letter-spacing:-0.1px;">unicef</div>
<div class="a" style="left:220.6px;top:316.8px;width:5.6px;height:5.6px;border-radius:50%;border:1px solid #6cc5ea;background:#e6f5fc"></div>
<div class="t" style="left:202.7px;top:326px;font-size:3.2px;color:#9ad6ee;letter-spacing:-0.04px;">for every child</div>
<div class="a" style="left:233.6px;top:315.4px;width:13px;height:13px;border-radius:50%;background:radial-gradient(#dfe5f2 0,#c9d2e6 30%,#b23a50 34%,#2a4580 44%,#1d3a74 56%,#fff 60%,#fff 66%,#1d3a74 70%)"></div>
<div class="t" style="left:247.2px;top:317px;font-size:9.6px;color:#c3122f;font-weight:bold;letter-spacing:-0.21px;"><span style="color:#1d3a74">US</span>AID</div>
<div class="t" style="left:248px;top:327px;font-size:2.6px;color:#1d3a74;font-weight:bold;letter-spacing:-0.47px;">FROM THE AMERICAN PEOPLE</div>
<div class="t" style="left:411.3px;top:151px;font-size:10.59px;color:#161616;font-weight:bold;letter-spacing:-0.34px;">Obilježja djelotvornog vođenja sažete</div>
<div class="t" style="left:411.3px;top:164px;font-size:10.68px;color:#161616;font-weight:bold;letter-spacing:-0.35px;">integracije traume</div>
<div class="t" style="left:420.2px;top:178px;font-size:9.44px;color:#2a2a2a;font-family:'Liberation Serif',serif;">Opća znanja o stresu</div>
<svg style="left:411.1px;top:180.2px" width="3" height="3" viewBox="0 0 3 3"><circle cx="1.500" cy="1.500" r="1.250" fill="#222"/></svg>
<div class="t" style="left:420.2px;top:193px;font-size:9.45px;color:#2a2a2a;font-family:'Liberation Serif',serif;">Specifična znanja o kriznim situacijama</div>
<svg style="left:411.1px;top:194.6px" width="3" height="3" viewBox="0 0 3 3"><circle cx="1.500" cy="1.500" r="1.250" fill="#222"/></svg>
<div class="t" style="left:420.2px;top:206px;font-size:9.44px;color:#2a2a2a;font-family:'Liberation Serif',serif;">Znanja o grupnoj dinamici i interakcijama</div>
<svg style="left:411.1px;top:208.4px" width="3" height="3" viewBox="0 0 3 3"><circle cx="1.500" cy="1.500" r="1.250" fill="#222"/></svg>
<div class="t" style="left:420.2px;top:229px;font-size:9.48px;color:#2a2a2a;font-family:'Liberation Serif',serif;">Komunikacione vještine</div>
<svg style="left:411.1px;top:231.2px" width="3" height="3" viewBox="0 0 3 3"><circle cx="1.500" cy="1.500" r="1.250" fill="#222"/></svg>
<div class="t" style="left:420.2px;top:243px;font-size:9.42px;color:#2a2a2a;font-family:'Liberation Serif',serif;">Vještine vođenja kriznih intervencija</div>
<svg style="left:411.1px;top:245.2px" width="3" height="3" viewBox="0 0 3 3"><circle cx="1.500" cy="1.500" r="1.250" fill="#222"/></svg>
<div class="t" style="left:420.2px;top:257px;font-size:9.39px;color:#2a2a2a;font-family:'Liberation Serif',serif;">Vještine vođenja grupe</div>
<svg style="left:411.1px;top:259.2px" width="3" height="3" viewBox="0 0 3 3"><circle cx="1.500" cy="1.500" r="1.250" fill="#222"/></svg>
<div class="t" style="left:420.2px;top:271px;font-size:9.51px;color:#2a2a2a;font-family:'Liberation Serif',serif;">Vještine rada sa tugujućim i traumatiziranim</div>
<svg style="left:411.1px;top:272.8px" width="3" height="3" viewBox="0 0 3 3"><circle cx="1.500" cy="1.500" r="1.250" fill="#222"/></svg>
<div class="t" style="left:420.2px;top:294px;font-size:9.38px;color:#2a2a2a;font-family:'Liberation Serif',serif;">Vještine timskog rada i lične osobine</div>
<svg style="left:411.1px;top:295.8px" width="3" height="3" viewBox="0 0 3 3"><circle cx="1.500" cy="1.500" r="1.250" fill="#222"/></svg>
<div class="t" style="left:420.2px;top:215px;font-size:9.36px;color:#2a2a2a;font-family:'Liberation Serif',serif;">među članovima grupe</div>
<div class="t" style="left:420.2px;top:279px;font-size:9.06px;color:#2a2a2a;font-family:'Liberation Serif',serif;">osobama</div>
</div></div>
<div id="edge"></div><div class="a" style="left:0;top:453px;width:707px;height:1.5px;background:#121212"></div>
<!-- ================= Zoom chrome ================= -->
<div id="zm">
<div class="a" style="left:0px;top:4px;width:18px;height:19px;background:#1e1e20;border-radius:3px"></div>
<svg style="left:3.6px;top:7.4px" width="11" height="12.2" viewBox="0 0 12 13"><path d="M6 .3l5.300 1.900v4.300q0 4-5.300 6.200Q.7 10.500.7 6.500V2.200z" fill="#27cc5f"/><path d="M3.300 6.400l2 2 3.500-3.800" fill="none" stroke="#fff" stroke-width="1.300" stroke-linecap="round" stroke-linejoin="round"/></svg>
<div class="a" style="left:977px;top:4.5px;width:41.5px;height:18.5px;background:#212123;border-radius:4px"></div>
<svg style="left:982px;top:9.5px" width="8.3" height="8.3" viewBox="0 0 8.3 8.3"><rect x="0" y="0" width="2.300" height="2.300" fill="#e4e4e4"/><rect x="0" y="3" width="2.300" height="2.300" fill="#e4e4e4"/><rect x="0" y="6" width="2.300" height="2.300" fill="#e4e4e4"/><rect x="3" y="0" width="2.300" height="2.300" fill="#e4e4e4"/><rect x="3" y="3" width="2.300" height="2.300" fill="#e4e4e4"/><rect x="3" y="6" width="2.300" height="2.300" fill="#e4e4e4"/><rect x="6" y="0" width="2.300" height="2.300" fill="#e4e4e4"/><rect x="6" y="3" width="2.300" height="2.300" fill="#e4e4e4"/><rect x="6" y="6" width="2.300" height="2.300" fill="#e4e4e4"/></svg>
<div class="t" style="left:994.8px;top:10px;font-size:9.13px;color:#e2e2e2;letter-spacing:-0.31px;">View</div>
<div class="a" style="left:707.6px;top:254px;width:1px;height:19.5px;background:#d9d9d9"></div>
<div class="a" style="left:710px;top:254px;width:1px;height:19.5px;background:#d9d9d9"></div>
<div class="a" style="left:743.1px;top:82.2px;width:127px;height:73.5px;background:linear-gradient(#e4ee68 0,#a6e24f 22%,#8edc4a 50%,#a6e24f 78%,#f0ea6e 100%)"></div>
<div class="tile" style="left:746.6px;top:85.7px;width:120px;height:66.5px;background:#b9c0c8"><svg style="left:0;top:0" width="121" height="68" viewBox="0 0 121 68">
<defs><linearGradient id="w0" x1="0" x2="1"><stop offset="0" stop-color="#aab4c0"/><stop offset=".4" stop-color="#bcc4cc"/><stop offset=".75" stop-color="#d2d6da"/><stop offset="1" stop-color="#d9dcde"/></linearGradient>
<filter id="bl" x="-10%" y="-10%" width="120%" height="120%"><feGaussianBlur stdDeviation="1.100"/></filter>
<filter id="bs" x="-10%" y="-10%" width="120%" height="120%"><feGaussianBlur stdDeviation=".600"/></filter></defs>
<rect width="121" height="68" fill="url(#w0)"/>
<g filter="url(#bl)">
<rect x="22.500" y="12" width="18" height="28" fill="#292a31"/><path d="M27 30q2-10 8-9l2 8-5 5z" fill="#77757c"/>
<ellipse cx="9" cy="37" rx="9" ry="9" fill="#c9cfd6"/>
<path d="M89 13l30-9M89 13l31 5M89 13l20 30M89 13l30 20M89 13l-4-13" stroke="#e9ebed" stroke-width=".8" fill="none"/>
<path d="M41 -2q-4 12 0 24l5-2V-2z" fill="#5b4a45"/><path d="M78 -2h9l2 30-4 18-8-4z" fill="#54433f"/>
<path d="M81 0q8 8 6 26l-2 19-6-3z" fill="#4a3a37"/>
<path d="M0 68V53q18-9 38-12l14 7 22-3q26-7 44-2 3 7 3 25z" fill="#b1272a"/>
<path d="M43 30h39l-1 14-3 8-12 12q-12-4-21-20z" fill="#c9a69a"/>
<ellipse cx="62.500" cy="17" rx="22.500" ry="27.500" fill="#cba89d"/>
<ellipse cx="62" cy="33" rx="17" ry="10.500" fill="#d3b2a7"/>
<path d="M40 -2h46l-1 5q-22-5-44 1z" fill="#4f3f3b"/>
</g>
<g filter="url(#bs)">
<path d="M44 3.500h18.500v9.500q-9 4.500-18.500 0zM66.500 4.500h16v10q-8 4-16-.5z" fill="rgba(190,160,150,.35)" stroke="#2a1f23" stroke-width="2.100" stroke-linejoin="round"/>
<path d="M62.500 6h4" stroke="#2a1f23" stroke-width="1.600"/>
<path d="M49 8.500q4-2 8 0M70 9.500q4-2 8 0" stroke="#4a3a3a" stroke-width="1.200" fill="none"/>
<path d="M62 10q-4 8-1 12 3 1.500 6-.5" stroke="#b48e84" stroke-width="1.300" fill="none"/>
<ellipse cx="59.500" cy="26.500" rx="6.500" ry="3" fill="#6b2c36"/><ellipse cx="59.500" cy="25.600" rx="4.500" ry="1.100" fill="#eadfdc"/>
<circle cx="89.300" cy="13" r="1.700" fill="#26262a"/><circle cx="118" cy="12" r="2.200" fill="#9aa0a6"/>
</g></svg></div>
<div class="a" style="left:746.6px;top:138.6px;width:74.9px;height:13.6px;background:rgba(52,44,40,.74)"></div>
<div class="t" style="left:749.6px;top:141px;font-size:9.9px;color:#f2f2f2;letter-spacing:-0.18px;">Djana Loncarica</div>
<div class="tile" style="left:871.8px;top:85.3px;width:120.5px;height:67.9px"></div>
<div class="t" style="left:882.5px;top:115px;font-size:11.95px;color:#fff;font-weight:bold;letter-spacing:-0.29px;">Amela  Hadžimej...</div>
<svg style="left:873.8px;top:140.4px" width="10.5" height="11.5" viewBox="0 0 10.5 11.5"><g><rect x="3.600" y=".5" width="3.600" height="6.500" rx="1.800" fill="#e0483f"/><path d="M1.800 5.300q0 3.500 3.600 3.500t3.600-3.500M5.400 8.800v2M3.400 10.900h4" fill="none" stroke="#e0483f" stroke-width="1"/><path d="M1 10.600L9.600.6" stroke="#e0483f" stroke-width="1.200"/></g></svg>
<div class="tile" style="left:746.3px;top:157.8px;width:120.5px;height:67.9px"><svg style="left:0;top:0" width="121" height="68" viewBox="0 0 121 68">
<defs><linearGradient id="w1" x1="0" x2="1"><stop offset="0" stop-color="#b0b1b4"/><stop offset="1" stop-color="#c2c3c6"/></linearGradient></defs>
<rect width="121" height="68" fill="url(#w1)"/>
<rect x="73.500" y="0" width="48" height="68" fill="#e4e8ee"/><rect x="86" y="0" width="22" height="68" fill="#f4f6f9"/>
<g filter="url(#bl)">
<rect x="0" y="48" width="74" height="20" fill="#a7a8ab"/>
<rect x="17.500" y="3.500" width="23" height="28" fill="#d9d9d4" stroke="#c6c6c2" stroke-width="1.200"/>
<path d="M25 22q3-10 9-8-4 3-3 8t-6 3z" fill="#bdb7a6"/>
<rect x="44" y="28" width="26" height="5" fill="#d9dadd"/>
<rect x="31.500" y="33" width="42" height="20" fill="#1b1b24"/><rect x="36.500" y="42" width="14" height="14" fill="#a9aeb3"/>
<rect x="51.500" y="39.500" width="1" height="5" fill="#cfcfd6"/><rect x="54" y="39.500" width="1" height="5" fill="#cfcfd6"/>
<path d="M109 0l3 68M115.500 0l1 68" stroke="#c3cad3" stroke-width="1.300"/><rect x="116" y="34" width="3" height="6" fill="#3a3e46"/>
<ellipse cx="75" cy="49" rx="8.500" ry="8" fill="#b3664e"/><ellipse cx="77" cy="55" rx="6.500" ry="6" fill="#b9a49c"/>
<path d="M70 68q2-10 12-9 10 2 11 9z" fill="#23242b"/>
</g></svg></div>
<div class="a" style="left:746.3px;top:211.7px;width:83.7px;height:14px;background:rgba(34,34,34,.78)"></div>
<svg style="left:748.3px;top:212.9px" width="10.5" height="11.5" viewBox="0 0 10.5 11.5"><g><rect x="3.600" y=".5" width="3.600" height="6.500" rx="1.800" fill="#e0483f"/><path d="M1.800 5.300q0 3.500 3.600 3.500t3.600-3.500M5.400 8.800v2M3.400 10.900h4" fill="none" stroke="#e0483f" stroke-width="1"/><path d="M1 10.600L9.600.6" stroke="#e0483f" stroke-width="1.200"/></g></svg>
<div class="t" style="left:763px;top:214px;font-size:9.92px;color:#f2f2f2;letter-spacing:-0.17px;">Centar za so...</div>
<div class="tile" style="left:871.8px;top:157.8px;width:120.5px;height:67.9px"><svg style="left:0;top:0" width="121" height="68" viewBox="0 0 121 68">
<defs><linearGradient id="w2" x1="0" x2="1"><stop offset="0" stop-color="#b6b39b"/><stop offset=".6" stop-color="#c7c5af"/><stop offset=".66" stop-color="#bebda7"/><stop offset=".8" stop-color="#abb4a0"/><stop offset="1" stop-color="#99a794"/></linearGradient>
<clipPath id="pc"><path d="M0 0h72l3 51.700H0z"/></clipPath></defs>
<rect width="121" height="68" fill="url(#w2)"/>
<g clip-path="url(#pc)"><g filter="url(#bl)">
<rect x="-2" y="-2" width="82" height="56" fill="#dcdee1"/>
<path d="M-2 -2h15l-2 5-13 4z" fill="#b64a44"/>
<path d="M38 25.800L-2 9v9z" fill="#4f8fb2"/><path d="M38 25.800L-2 18v8z" fill="#a9c6d3"/><path d="M38 25.800L-2 26v6z" fill="#5b97b6"/><path d="M38 25.800L-2 36l0 4z" fill="#9dbccb"/>
<path d="M-2 30l14 0 8 4-9 18H-2z" fill="#8d5d62"/><path d="M-2 12l10 3-10 6z" fill="#3d5f7a" opacity=".7"/>
<path d="M38 25.800L29 -2h6z" fill="#c8655d" opacity=".8"/><path d="M38 25.800L40 -2h4z" fill="#cf7a72" opacity=".7"/>
<path d="M46 13l26-2 1 10-30 5z" fill="#c43c31"/>
<path d="M46 27l27-5 2 27H49z" fill="#bf392e"/>
<path d="M48 36h26l1 14H50z" fill="#b8372e"/>
<rect x="52" y="30.600" width="21" height="2.300" fill="#f0dcd5"/>
<g stroke="#2a2c32" stroke-width="1" fill="none"><path d="M38 25.800L6 2M38 25.800L-2 14M38 25.800L-2 24M38 25.800L0 36M38 25.800L8 48M38 25.800L24 54M38 25.800L16 -2M38 25.800L26 -2M38 25.800L36 -2M38 25.800L46 -2M38 25.800L58 -2M38 25.800L70 4M38 25.800L74 16M38 25.800L14 42"/></g>
<path d="M38 25.800L68 50" stroke="#3a2624" stroke-width="2.800"/>
<ellipse cx="38" cy="25.800" rx="4.500" ry="4" fill="#2c2426"/>
</g></g></svg></div>
<div class="a" style="left:871.8px;top:211.7px;width:83.8px;height:14px;background:rgba(34,34,34,.78)"></div>
<svg style="left:873.8px;top:212.9px" width="10.5" height="11.5" viewBox="0 0 10.5 11.5"><g><rect x="3.600" y=".5" width="3.600" height="6.500" rx="1.800" fill="#e0483f"/><path d="M1.800 5.300q0 3.500 3.600 3.500t3.600-3.500M5.400 8.800v2M3.400 10.900h4" fill="none" stroke="#e0483f" stroke-width="1"/><path d="M1 10.600L9.600.6" stroke="#e0483f" stroke-width="1.200"/></g></svg>
<div class="t" style="left:888.4px;top:214px;font-size:9.52px;color:#f2f2f2;letter-spacing:-0.19px;">Sanida Sehm...</div>
<div class="tile" style="left:746.3px;top:230.1px;width:120.5px;height:67.9px"></div>
<div class="t" style="left:763.8px;top:260px;font-size:11.1px;color:#fff;font-weight:bold;letter-spacing:-0.29px;">Sanja Gluvačević</div>
<svg style="left:748.3px;top:285.2px" width="10.5" height="11.5" viewBox="0 0 10.5 11.5"><g><rect x="3.600" y=".5" width="3.600" height="6.500" rx="1.800" fill="#e0483f"/><path d="M1.800 5.300q0 3.500 3.600 3.500t3.600-3.500M5.400 8.800v2M3.400 10.900h4" fill="none" stroke="#e0483f" stroke-width="1"/><path d="M1 10.600L9.600.6" stroke="#e0483f" stroke-width="1.200"/></g></svg>
<div class="tile" style="left:871.8px;top:230.1px;width:120.5px;height:67.9px"><svg style="left:0;top:0" width="121" height="68" viewBox="0 0 121 68">
<rect width="121" height="68" fill="#bcbcbd"/>
<g filter="url(#bl)">
<rect x="0" y="0" width="16" height="34" fill="#c6cbd6"/><rect x="0" y="8" width="2.500" height="22" fill="#5a6a9a"/>
<rect x="17" y="0" width="27" height="42" fill="#dcdee0"/><rect x="24" y="2" width="13" height="4" fill="#b4bac2"/><rect x="20" y="11" width="20" height="1.500" fill="#c0c3c9"/><rect x="20" y="17" width="20" height="1.500" fill="#c4c7cc"/><rect x="22" y="24" width="14" height="1.500" fill="#c9cbd0"/>
<rect x="44.500" y="0" width="2" height="40" fill="#97999d"/>
<rect x="47" y="0" width="30" height="30" fill="#c4c4c5"/>
<rect x="77.500" y="0" width="5" height="30" fill="#35353a"/>
<rect x="82.500" y="0" width="27" height="27.500" fill="#f6f7f8"/><rect x="108.500" y="0" width="2.500" height="30" fill="#b98f86"/>
<rect x="111" y="0" width="10" height="30" fill="#c2c3c4"/>
<rect x="82.500" y="26.500" width="38.500" height="5" fill="#4f4a46"/>
<rect x="0" y="36" width="121" height="32" fill="#302f31"/>
<rect x="14" y="30" width="34" height="12" fill="#8d8e91"/>
<path d="M0 34q12-7 17 5v24H0z" fill="#202c24"/>
<path d="M62 18l3 30M57 30q7-9 13 2M58 40q6-6 12 0" stroke="#2a362c" stroke-width="2.500" fill="none"/>
<path d="M28 39h22l6 17H24z" fill="#5f3d32"/><ellipse cx="39.500" cy="38" rx="4" ry="4.500" fill="#a29480"/><path d="M28 58q2-14 12-14t12 14z" fill="#1b1e22"/><rect x="37" y="41" width="5" height="6" fill="#86a591"/>
<path d="M76 38q2-8 13-7 12 1 16 10l-3 27H86q-4-18-10-30z" fill="#744536"/><ellipse cx="90" cy="35.500" rx="11" ry="5.500" fill="#8a5947"/>
<path d="M56 50q10-6 24 0l4 18H52z" fill="#18191c"/>
<rect x="103" y="34" width="18" height="24" fill="#23262b"/><rect x="100" y="46" width="21" height="3" fill="#6a6d72"/>
</g></svg></div>
<div class="a" style="left:871.8px;top:284px;width:57.2px;height:14px;background:rgba(34,34,34,.78)"></div>
<svg style="left:873.8px;top:285.2px" width="10.5" height="11.5" viewBox="0 0 10.5 11.5"><g><rect x="3.600" y=".5" width="3.600" height="6.500" rx="1.800" fill="#e0483f"/><path d="M1.800 5.300q0 3.500 3.600 3.500t3.600-3.500M5.400 8.800v2M3.400 10.900h4" fill="none" stroke="#e0483f" stroke-width="1"/><path d="M1 10.600L9.600.6" stroke="#e0483f" stroke-width="1.200"/></g></svg>
<div class="t" style="left:888.4px;top:287px;font-size:8.89px;color:#f2f2f2;letter-spacing:-0.24px;">BHIDAPA</div>
<div class="tile" style="left:746.3px;top:302.5px;width:120.5px;height:67.9px"></div>
<div class="t" style="left:760.8px;top:331px;font-size:12.24px;color:#fff;font-weight:bold;letter-spacing:-0.35px;">AZRA ARNAUT...</div>
<svg style="left:748.3px;top:357.6px" width="10.5" height="11.5" viewBox="0 0 10.5 11.5"><g><rect x="3.600" y=".5" width="3.600" height="6.500" rx="1.800" fill="#e0483f"/><path d="M1.800 5.300q0 3.500 3.600 3.500t3.600-3.500M5.400 8.800v2M3.400 10.900h4" fill="none" stroke="#e0483f" stroke-width="1"/><path d="M1 10.600L9.600.6" stroke="#e0483f" stroke-width="1.200"/></g></svg>
<div class="tile" style="left:871.8px;top:302.5px;width:120.5px;height:67.9px"></div>
<div class="t" style="left:894.4px;top:333px;font-size:11.22px;color:#fff;font-weight:bold;letter-spacing:-0.29px;">Esmin Brodlija</div>
<svg style="left:873.8px;top:357.6px" width="10.5" height="11.5" viewBox="0 0 10.5 11.5"><g><rect x="3.600" y=".5" width="3.600" height="6.500" rx="1.800" fill="#e0483f"/><path d="M1.800 5.300q0 3.500 3.600 3.500t3.600-3.500M5.400 8.800v2M3.400 10.900h4" fill="none" stroke="#e0483f" stroke-width="1"/><path d="M1 10.600L9.600.6" stroke="#e0483f" stroke-width="1.200"/></g></svg>
<div class="tile" style="left:746.3px;top:375px;width:120.5px;height:67.9px"><div class="a" style="left:30px;top:3.300px;width:60.200px;height:60.200px;background:#c4185c"></div></div>
<div class="t" style="left:794.9px;top:394px;font-size:32px;color:#fff;">D</div>
<div class="a" style="left:746.3px;top:428.3px;width:84.2px;height:14.6px;background:rgba(34,34,34,.78)"></div>
<svg style="left:748.3px;top:430.1px" width="10.5" height="11.5" viewBox="0 0 10.5 11.5"><g><rect x="3.600" y=".5" width="3.600" height="6.500" rx="1.800" fill="#e0483f"/><path d="M1.800 5.300q0 3.500 3.600 3.500t3.600-3.500M5.400 8.800v2M3.400 10.900h4" fill="none" stroke="#e0483f" stroke-width="1"/><path d="M1 10.600L9.600.6" stroke="#e0483f" stroke-width="1.200"/></g></svg>
<div class="t" style="left:763.2px;top:431px;font-size:9.72px;color:#f2f2f2;letter-spacing:-0.2px;">Dzenana Kun...</div>
<div class="tile" style="left:871.8px;top:375px;width:120.5px;height:67.9px"></div>
<div class="t" style="left:902.9px;top:405px;font-size:11.29px;color:#fff;font-weight:bold;letter-spacing:-0.28px;">Željka Prce</div>
<svg style="left:873.8px;top:430.1px" width="10.5" height="11.5" viewBox="0 0 10.5 11.5"><g><rect x="3.600" y=".5" width="3.600" height="6.500" rx="1.800" fill="#e0483f"/><path d="M1.800 5.300q0 3.500 3.600 3.500t3.600-3.500M5.400 8.800v2M3.400 10.900h4" fill="none" stroke="#e0483f" stroke-width="1"/><path d="M1 10.600L9.600.6" stroke="#e0483f" stroke-width="1.200"/></g></svg>
<div class="a" style="left:841.2px;top:447.6px;width:55.8px;height:25.1px;background:#0e0e0e;border-radius:2px"></div>
<svg style="left:863.6px;top:457px" width="11" height="7" viewBox="0 0 11 7"><path d="M1 1l4.500 4.500L10 1" fill="none" stroke="#c8c8c8" stroke-width="1.500"/></svg>
<div class="t" style="left:12.5px;top:516px;font-size:9.03px;color:#c6c6c6;font-weight:bold;letter-spacing:-0.31px;">Unmute</div>
<div class="t" style="left:76.5px;top:516px;font-size:8.74px;color:#c6c6c6;font-weight:bold;letter-spacing:-0.22px;">Start Video</div>
<div class="t" style="left:319.6px;top:516px;font-size:8.43px;color:#c6c6c6;font-weight:bold;letter-spacing:-0.22px;">Security</div>
<div class="t" style="left:391.8px;top:516px;font-size:8.55px;color:#c6c6c6;font-weight:bold;letter-spacing:-0.21px;">Participants</div>
<div class="t" style="left:484.8px;top:517px;font-size:8.0px;color:#c6c6c6;font-weight:bold;letter-spacing:-0.23px;">Polls</div>
<div class="t" style="left:546px;top:517px;font-size:8.13px;color:#c6c6c6;font-weight:bold;letter-spacing:-0.29px;">Chat</div>
<div class="t" style="left:595.6px;top:516px;font-size:8.43px;color:#2bcf5b;font-weight:bold;letter-spacing:-0.23px;">Share Screen</div>
<div class="t" style="left:674.6px;top:516px;font-size:8.53px;color:#c6c6c6;font-weight:bold;letter-spacing:-0.27px;">Record</div>
<div class="t" style="left:729.8px;top:516px;font-size:8.44px;color:#c6c6c6;font-weight:bold;letter-spacing:-0.23px;">Reactions</div>
<svg style="left:50px;top:501px" width="6" height="5" viewBox="0 0 6 5"><path d="M.8 3.600L3 1.300l2.200 2.300" fill="none" stroke="#bcbcbc" stroke-width="1.300"/></svg>
<svg style="left:124px;top:501px" width="6" height="5" viewBox="0 0 6 5"><path d="M.8 3.600L3 1.300l2.200 2.300" fill="none" stroke="#bcbcbc" stroke-width="1.300"/></svg>
<svg style="left:451.8px;top:501px" width="6" height="5" viewBox="0 0 6 5"><path d="M.8 3.600L3 1.300l2.200 2.300" fill="none" stroke="#bcbcbc" stroke-width="1.300"/></svg>
<svg style="left:646.3px;top:501px" width="6" height="5" viewBox="0 0 6 5"><path d="M.8 3.600L3 1.300l2.200 2.300" fill="none" stroke="#bcbcbc" stroke-width="1.300"/></svg>
<svg style="left:19px;top:493.5px" width="20" height="19" viewBox="0 0 20 19"><rect x="7" y="1.500" width="5.200" height="9.500" rx="2.600" fill="#bcbcbc"/><path d="M4.500 8.500q0 5 5.100 5t5.100-5M9.600 13.500v3M6.600 16.700h6" fill="none" stroke="#bcbcbc" stroke-width="1.300"/><path d="M1.200 17.600L18.200 1.200" stroke="#cf4a45" stroke-width="1.400"/></svg>
<svg style="left:89px;top:494px" width="20" height="17" viewBox="0 0 20 17"><rect x="1" y="3.500" width="11.500" height="11" rx="1.800" fill="#bcbcbc"/><path d="M13.300 8l5.200-3.300v9.600L13.300 11z" fill="#bcbcbc"/><path d="M1.500 16.200L17 .8" stroke="#cf4a45" stroke-width="1.400"/></svg>
<svg style="left:329px;top:495.5px" width="14" height="15.5" viewBox="0 0 14 15.5"><path d="M7 .6l6.200 2.200v5q0 4.800-6.200 7.200Q.8 12.600.8 7.800v-5z" fill="none" stroke="#bcbcbc" stroke-width="1.300"/><path d="M7 1.500v6.300H1.500V3.400zM7 7.800h5.500q-.4 4-5.500 6.300z" fill="#bcbcbc"/></svg>
<svg style="left:405.5px;top:497px" width="19" height="13" viewBox="0 0 19 13"><circle cx="6" cy="3.400" r="3" fill="#bcbcbc"/><path d="M.3 12.600q0-5 5.700-5t5.700 5z" fill="#bcbcbc"/><circle cx="13.800" cy="4.600" r="2.500" fill="#bcbcbc"/><path d="M12.400 12.600q-.2-3-2-4.300 1.600-.7 3.400-.7 4.800 0 4.800 5z" fill="#bcbcbc"/></svg>
<div class="t" style="left:427.4px;top:497px;font-size:8.8px;color:#c6c6c6;font-weight:bold;letter-spacing:-0.4px;">27</div>
<svg style="left:487px;top:496px" width="15" height="14" viewBox="0 0 15 14"><rect x=".2" y="6.800" width="4" height="7" rx=".6" fill="#bcbcbc"/><rect x="5.200" y=".2" width="4" height="13.600" rx=".6" fill="#bcbcbc"/><rect x="10.300" y="3.600" width="4" height="10.200" rx=".6" fill="#bcbcbc"/></svg>
<svg style="left:546.6px;top:496px" width="16" height="14" viewBox="0 0 16 14"><path d="M3 .3h10q2.700 0 2.700 2.700v4.600q0 2.700-2.700 2.700H7.500L3.400 13.700v-3.400H3Q.3 10.300.3 7.600V3Q.3.300 3 .3z" fill="#bcbcbc"/></svg>
<div class="a" style="left:612.7px;top:496.2px;width:18.3px;height:13.7px;background:#2ccf5a;border-radius:2.500px"></div>
<svg style="left:618.3px;top:498.5px" width="7" height="9" viewBox="0 0 7 9"><path d="M3.500.8v7.500M.8 3.800L3.500.9l2.700 2.900" fill="none" stroke="#12361c" stroke-width="1.500"/></svg>
<svg style="left:681px;top:495.2px" width="16" height="16" viewBox="0 0 16 16"><circle cx="8" cy="8" r="7.100" fill="none" stroke="#bcbcbc" stroke-width="1.300"/><circle cx="8" cy="8" r="4.800" fill="#bcbcbc"/></svg>
<svg style="left:742.4px;top:494.5px" width="17" height="16" viewBox="0 0 17 16"><circle cx="7" cy="8.600" r="6.800" fill="#bcbcbc"/><circle cx="4.700" cy="7" r="1" fill="#1a1a1a"/><circle cx="9.300" cy="7" r="1" fill="#1a1a1a"/><path d="M3.800 10q3.200 3.400 6.400 0" fill="none" stroke="#1a1a1a" stroke-width="1.200"/><circle cx="13" cy="2.600" r="3.300" fill="#1a1a1a"/><path d="M13 .3v4.600M10.700 2.600h4.600" stroke="#bcbcbc" stroke-width="1.200"/></svg>
<div class="a" style="left:969.8px;top:500.2px;width:46.2px;height:19.8px;background:#c8282c;border-radius:4px;box-shadow:0 0 0 1px #5a1214"></div>
<div class="t" style="left:979.5px;top:506px;font-size:9.17px;color:#fff;font-weight:bold;letter-spacing:-0.24px;">Leave</div>
</div>
</body>
</html>
